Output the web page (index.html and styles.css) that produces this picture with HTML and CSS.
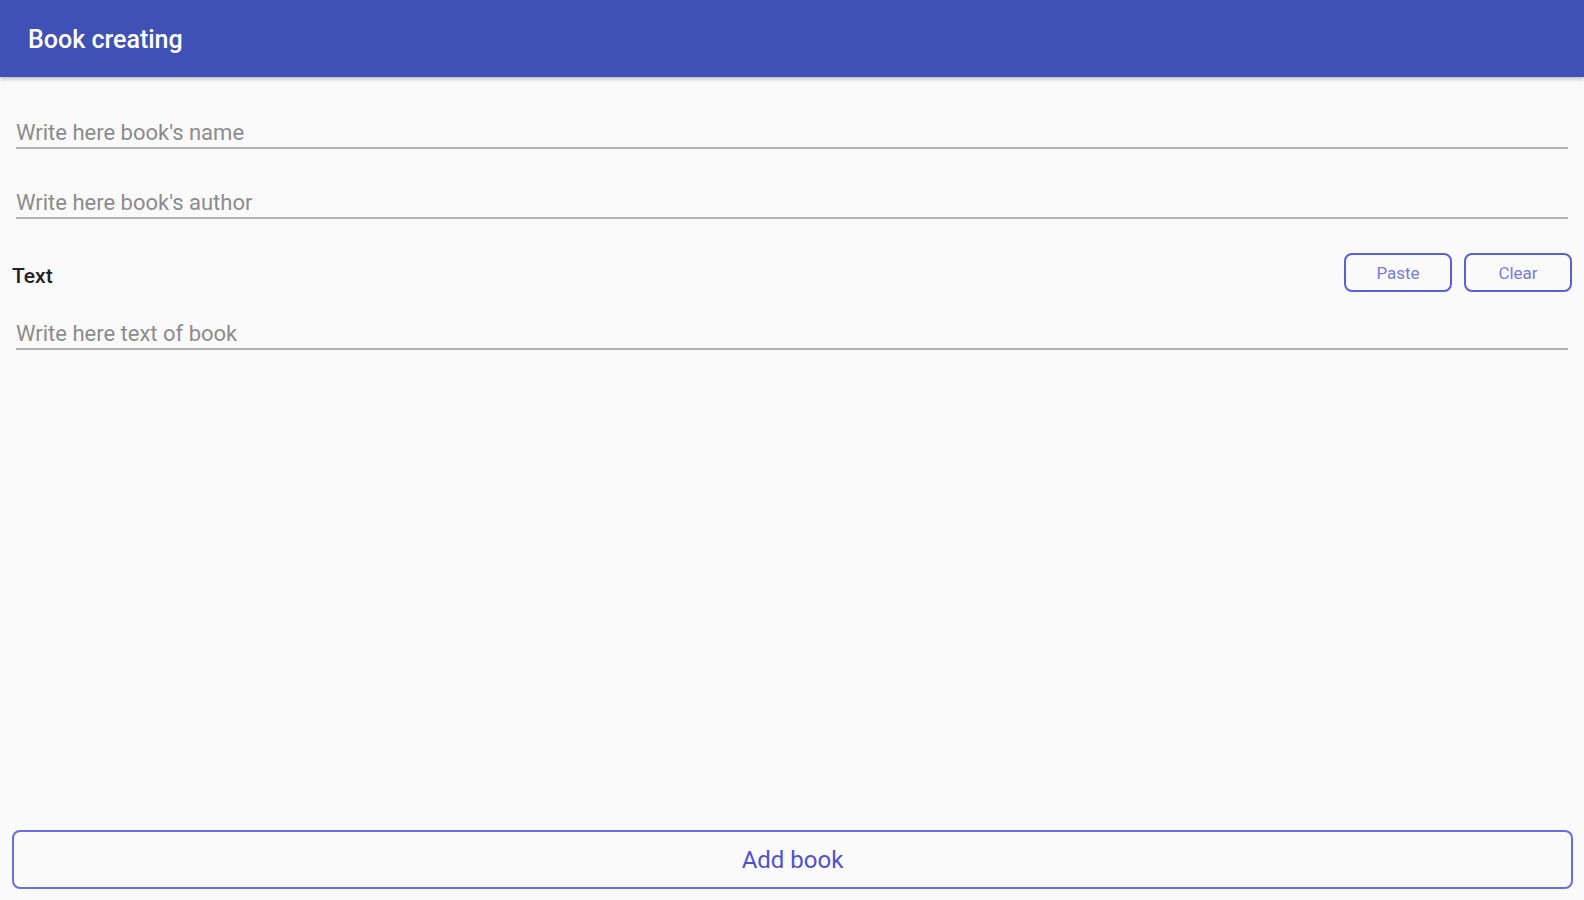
FILE: index.html
```html
<!DOCTYPE html>
<html lang="en">
<head>
    <meta charset="UTF-8">
    <meta name="viewport" content="width=device-width, initial-scale=1.0">
    <title>Book creating</title>
    <link rel="stylesheet" href="styles.css">
</head>
<body>
    <header class="toolbar">
        <h1>Book creating</h1>
    </header>

    <main class="form">
        <input type="text" class="field field-name" placeholder="Write here book's name">
        <input type="text" class="field field-author" placeholder="Write here book's author">

        <div class="text-row">
            <span class="text-label">Text</span>
            <div class="text-actions">
                <button class="small-button">Paste</button>
                <button class="small-button">Clear</button>
            </div>
        </div>

        <input type="text" class="field field-text" placeholder="Write here text of book">
    </main>

    <div class="bottom">
        <button class="add-button">Add book</button>
    </div>
</body>
</html>
```

FILE: styles.css
```css
html, body {
    height: 100%;
}
body {
    margin: 0;
    font-family: Roboto, "Noto Sans", sans-serif;
    background-color: #fafafa;
    color: #333;
    display: flex;
    flex-direction: column;
    overflow: hidden;
}
.toolbar {
    height: 77px;
    flex-shrink: 0;
    background-color: #3f51b5;
    display: flex;
    align-items: center;
    padding-left: 28px;
    box-shadow: 0 2px 4px rgba(0, 0, 0, 0.25);
    position: relative;
    z-index: 1;
}
.toolbar h1 {
    margin: 0;
    color: #fff;
    font-size: 25px;
    font-weight: 500;
    margin-top: 2px;
}
.form {
    flex: 1;
    display: flex;
    flex-direction: column;
    padding: 0 12px;
}
.field {
    display: block;
    margin: 0 4px;
    height: 32px;
    padding: 0;
    box-sizing: border-box;
    border: none;
    border-bottom: 2px solid #b4b4b4;
    background: transparent;
    font-family: Roboto, "Noto Sans", sans-serif;
    font-size: 22px;
    color: #333;
    outline: none;
}
.field::placeholder {
    color: #8c8c8c;
}
.field-name {
    margin-top: 40px;
}
.field-author {
    margin-top: 38px;
}
.field-text {
    margin-top: 26px;
}
.text-row {
    margin-top: 34px;
    display: flex;
    align-items: center;
    justify-content: space-between;
}
.text-label {
    font-size: 21px;
    font-weight: 500;
    color: #222;
    margin-top: 6px;
}
.text-actions {
    display: flex;
    gap: 12px;
}
.small-button {
    width: 108px;
    height: 39px;
    border: 2px solid #5b5fd8;
    border-radius: 8px;
    background: transparent;
    color: #7a7ae0;
    font-family: Roboto, "Noto Sans", sans-serif;
    font-size: 17px;
    cursor: pointer;
}
.bottom {
    flex-shrink: 0;
    padding: 0 11px 11px 12px;
}
.add-button {
    width: 100%;
    height: 59px;
    border: 2px solid #6a6ee0;
    border-radius: 8px;
    background: transparent;
    color: #4f52d0;
    font-family: Roboto, "Noto Sans", sans-serif;
    font-size: 24px;
    cursor: pointer;
}
```
